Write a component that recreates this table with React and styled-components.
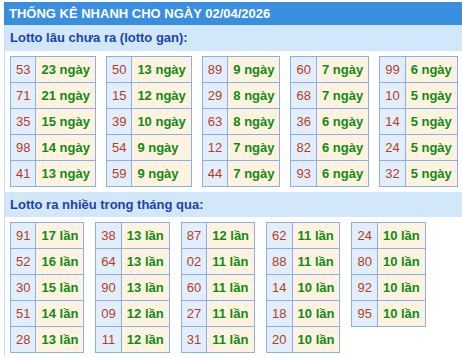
import styled, { createGlobalStyle } from "styled-components";

const GlobalStyle = createGlobalStyle`
  body {
    margin: 0;
    background: #ffffff;
    font-family: "Liberation Sans", Arial, sans-serif;
  }
`;

const Wrapper = styled.div`
  margin: 2px 0 0 4px;
  width: 470px;
  border-left: 1px solid #c9ddf5;
`;

const Header = styled.div`
  background-color: #3a8ee0;
  color: #ffffff;
  font-size: 13px;
  font-weight: bold;
  height: 23px;
  line-height: 23px;
  padding-left: 5px;
  margin-left: -1px;
`;

const Band = styled.div`
  background-color: #d3e7fb;
  color: #1a44a8;
  font-size: 13px;
  font-weight: bold;
  height: ${(props) => props.h}px;
  line-height: ${(props) => props.h}px;
  padding-left: 5px;
`;

const TableRow = styled.div`
  display: flex;
  align-items: flex-start;
  gap: ${(props) => props.gap}px;
  padding: 5px 0 ${(props) => props.pb}px 5px;
`;

const Table = styled.table`
  border-collapse: collapse;
  font-size: 13px;
  white-space: nowrap;
`;

const Num = styled.td`
  border: 1px solid #8aaef0;
  background-color: #e2eefc;
  color: #b3401c;
  text-align: center;
  height: 25px;
  line-height: 25px;
  padding: 0 5px;
`;

const Val = styled.td`
  border: 1px solid #8aaef0;
  background-color: #fdf3e0;
  color: #128a12;
  font-weight: bold;
  text-align: left;
  height: 25px;
  line-height: 25px;
  padding: 0 5px;
`;

const gan = [
  [["53", 23], ["71", 21], ["35", 15], ["98", 14], ["41", 13]],
  [["50", 13], ["15", 12], ["39", 10], ["54", 9], ["59", 9]],
  [["89", 9], ["29", 8], ["63", 8], ["12", 7], ["44", 7]],
  [["60", 7], ["68", 7], ["36", 6], ["82", 6], ["93", 6]],
  [["99", 6], ["10", 5], ["14", 5], ["24", 5], ["32", 5]],
];

const nhieu = [
  [["91", 17], ["52", 16], ["30", 15], ["51", 14], ["28", 13]],
  [["38", 13], ["64", 13], ["90", 13], ["09", 12], ["11", 12]],
  [["87", 12], ["02", 11], ["60", 11], ["27", 11], ["31", 11]],
  [["62", 11], ["88", 11], ["14", 10], ["18", 10], ["20", 10]],
  [["24", 10], ["80", 10], ["92", 10], ["95", 10]],
];

function Tables({ data, unit, pb, gap }) {
  return (
    <TableRow pb={pb} gap={gap}>
      {data.map((tbl, i) => (
        <Table key={i}>
          <tbody>
            {tbl.map(([n, c]) => (
              <tr key={n}>
                <Num>{n}</Num>
                <Val>
                  {c} {unit}
                </Val>
              </tr>
            ))}
          </tbody>
        </Table>
      ))}
    </TableRow>
  );
}

export default function App() {
  return (
    <>
      <GlobalStyle />
      <Wrapper>
        <Header>THỐNG KÊ NHANH CHO NGÀY 02/04/2026</Header>
        <Band h={26}>Lotto lâu chưa ra (lotto gan):</Band>
        <Tables data={gan} unit="ngày" pb={5} gap={10} />
        <Band h={25}>Lotto ra nhiều trong tháng qua:</Band>
        <Tables data={nhieu} unit="lần" pb={5} gap={11} />
      </Wrapper>
    </>
  );
}
